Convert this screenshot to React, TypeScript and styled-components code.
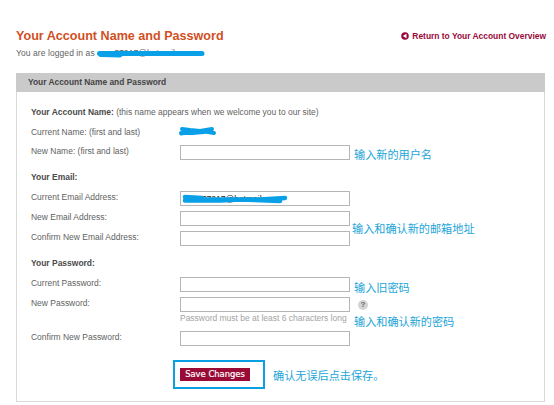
import React from 'react';
import styled, { createGlobalStyle } from 'styled-components';

const GlobalStyle = createGlobalStyle`
  * {
    box-sizing: border-box;
  }

  body {
    margin: 0;
    background: #fff;
    color: #5f5f5f;
    font-family: 'Liberation Sans', Arial, sans-serif;
    font-size: 8.48px;
    line-height: 12px;
  }
`;

const Page = styled.main`
  width: 554px;
  height: 405px;
  padding: 28px 8px 0 16px;
  overflow: hidden;
`;

const PageHeader = styled.header`
  display: flex;
  justify-content: space-between;
  height: 45px;
`;

const Title = styled.h1`
  margin: 0;
  color: #d1501f;
  font-size: 12.58px;
  line-height: 16px;
`;

const LoggedIn = styled.p`
  position: relative;
  margin: 3px 0 0;
  letter-spacing: 0.09px;
  white-space: nowrap;
`;

const ReturnLink = styled.a`
  display: flex;
  align-items: center;
  gap: 3px;
  height: 16px;
  color: #98093a;
  font-size: 8.44px;
  font-weight: bold;
  white-space: nowrap;
`;

const Panel = styled.section`
  width: 529px;
  height: 329px;
  border: 1px solid #d9d9d9;
  border-top: 0;
`;

const PanelTitle = styled.h2`
  height: 19px;
  margin: 0 -1px;
  padding: 0 12px;
  background: #cacaca;
  color: #444;
  font-size: 8.4px;
  line-height: 19px;
`;

const Form = styled.form`
  padding: 14px 0 0 14px;
`;

const GroupTitle = styled.h3<{ $height: number }>`
  height: ${({ $height }) => $height}px;
  margin: 0;
  font-size: 8.48px;
  font-weight: normal;

  b {
    color: #4a4a4a;
  }
`;

const Group = styled.div<{ $height: number }>`
  display: grid;
  grid-template-columns: 320px 1fr;
  height: ${({ $height }) => $height}px;
`;

const Row = styled.div<{ $height?: number }>`
  display: grid;
  grid-template-columns: 149px 171px;
  height: ${({ $height = 20 }) => $height}px;
`;

const FieldBox = styled.div`
  position: relative;
`;

const Input = styled.input`
  display: block;
  width: 170px;
  height: 15px;
  padding: 0 2px;
  border: 1px solid #b5b5b5;
  background: #fff;
  color: #222;
  font: 8.5px 'Liberation Sans', Arial, sans-serif;
  outline: 0;
`;

const Hint = styled.span`
  display: block;
  color: #a3a3a3;
  white-space: nowrap;
`;

const Side = styled.div`
  display: flex;
  flex-direction: column;
`;

const Note = styled.span<{ $top?: number; $left?: number }>`
  margin: ${({ $top = 0 }) => $top}px 0 0 ${({ $left = 0 }) => $left}px;
  color: #23a5d8;
  font: 11.15px/16px 'Noto Sans CJK SC', sans-serif;
  white-space: nowrap;
`;

const Help = styled.span`
  display: flex;
  align-items: center;
  justify-content: center;
  width: 10px;
  height: 10px;
  margin: 5px 0 0 7px;
  border-radius: 50%;
  background: #d4d4d4;
  color: #666;
  font-size: 8px;
  font-weight: bold;
`;

const Actions = styled.div`
  display: flex;
  align-items: center;
  margin-left: 142px;
`;

const SaveFrame = styled.div`
  display: flex;
  align-items: center;
  width: 92px;
  height: 29px;
  padding-left: 5px;
  border: 2px solid #0ba0e2;
`;

const SaveButton = styled.button`
  width: 70px;
  height: 13px;
  padding: 0;
  border: 0;
  background: #990a37;
  color: #fff;
  font: 8.4px/13px 'DejaVu Sans', sans-serif;
  -webkit-text-stroke: 0.2px #fff;
`;

const Scribble = styled.svg<{ $left: number; $top: number }>`
  position: absolute;
  left: ${({ $left }) => $left}px;
  top: ${({ $top }) => $top}px;
  fill: none;
  stroke: #0aa0e8;
  stroke-linecap: round;
  stroke-linejoin: round;
`;

interface FieldProps {
  label: string;
  value?: string;
  hint?: string;
  height?: number;
  children?: React.ReactNode;
}

const Field: React.FC<FieldProps> = ({ label, value, hint, height, children }) => (
  <Row $height={height}>
    <label>{label}</label>
    <FieldBox>
      <Input defaultValue={value} aria-label={label} />
      {hint && <Hint>{hint}</Hint>}
      {children}
    </FieldBox>
  </Row>
);

const BackIcon = () => (
  <svg width="8" height="8" viewBox="0 0 8 8">
    <circle cx="4" cy="4" r="3.8" fill="#98093a" />
    <path d="M5.5 1.8v4.4L1.8 4z" fill="#fff" />
  </svg>
);

export default function App() {
  return (
    <>
      <GlobalStyle />
      <Page>
        <PageHeader>
          <div>
            <Title>Your Account Name and Password</Title>
            <LoggedIn>
              You are logged in as &nbsp; &nbsp; &nbsp; &nbsp;37217@hotmail
              <Scribble $left={80} $top={2} width="112" height="10">
                <path d="M3.5 4.5H106M5 5.5L24 6" strokeWidth="5" />
              </Scribble>
            </LoggedIn>
          </div>
          <ReturnLink>
            <BackIcon />
            Return to Your Account Overview
          </ReturnLink>
        </PageHeader>

        <Panel>
          <PanelTitle>Your Account Name and Password</PanelTitle>
          <Form>
            <GroupTitle $height={20}>
              <b>Your Account Name:</b> (this name appears when we welcome you to our site)
            </GroupTitle>
            <Row $height={19}>
              <span>Current Name: (first and last)</span>
              <FieldBox>
                <Scribble $left={-2} $top={0} width="40" height="12">
                  <path d="M4 3L12 4L22 5L34 3M3 7.5L14 5.5L24 5L36 7M3 7H14L26 6L32 4" strokeWidth="4" />
                </Scribble>
              </FieldBox>
            </Row>
            <Group $height={26}>
              <Field label="New Name: (first and last)" />
              <Side>
                <Note $top={1} $left={3}>输入新的用户名</Note>
              </Side>
            </Group>

            <GroupTitle $height={20}>
              <b>Your Email:</b>
            </GroupTitle>
            <Group $height={66}>
              <div>
                <Field label="Current Email Address:" value="a      37217@hotmail">
                  <Scribble $left={0} $top={1} width="112" height="13">
                    <path d="M5 5L22 6M5 8.5H40L60 7.5L100 9M18 7.5H80L105 6" strokeWidth="4.5" />
                  </Scribble>
                </Field>
                <Field label="New Email Address:" />
                <Field label="Confirm New Email Address:" />
              </div>
              <Side>
                <Note $top={29} $left={1}>输入和确认新的邮箱地址</Note>
              </Side>
            </Group>

            <GroupTitle $height={20}>
              <b>Your Password:</b>
            </GroupTitle>
            <Group $height={83}>
              <div>
                <Field label="Current Password:" />
                <Field
                  label="New Password:"
                  hint="Password must be at least 6 characters long"
                  height={34}
                />
                <Field label="Confirm New Password:" />
              </div>
              <Side>
                <Note $top={2} $left={3}>输入旧密码</Note>
                <Help>?</Help>
                <Note $top={3} $left={3}>输入和确认新的密码</Note>
              </Side>
            </Group>

            <Actions>
              <SaveFrame>
                <SaveButton type="button">Save Changes</SaveButton>
              </SaveFrame>
              <Note $left={8}>确认无误后点击保存。</Note>
            </Actions>
          </Form>
        </Panel>
      </Page>
    </>
  );
}
